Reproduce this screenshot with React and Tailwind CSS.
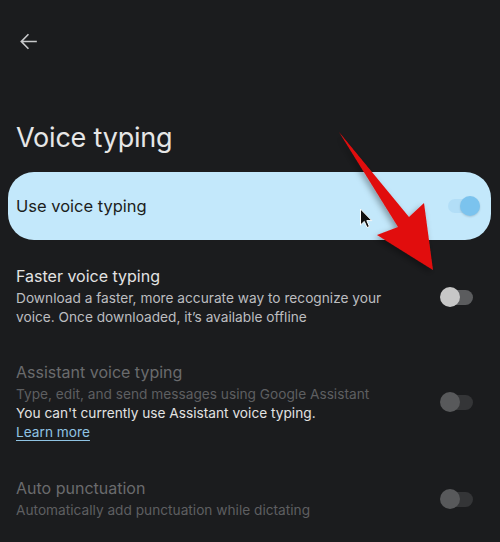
import React from 'react';

const Toggle = ({ on, dim }) => {
  if (on) {
    return (
      <div className="relative w-[32px] h-[20px] shrink-0">
        <div className="absolute left-0 right-0 top-[3px] h-[14px] rounded-full bg-[#b2def7]" />
        <div className="absolute right-0 top-0 w-[20px] h-[20px] rounded-full bg-[#7bc3ee] shadow-[0_1px_2px_rgba(0,0,0,0.15)]" />
      </div>
    );
  }
  return (
    <div className="relative w-[33px] h-[20px] shrink-0">
      <div className={`absolute left-[2px] right-0 top-[3px] h-[15px] rounded-full ${dim ? 'bg-[#343537]' : 'bg-[#5b5c5e]'}`} />
      <div className={`absolute left-0 top-0 w-[20px] h-[20px] rounded-full ${dim ? 'bg-[#58595b]' : 'bg-[#c7c7c7]'}`} />
    </div>
  );
};

const Row = ({ title, dim, toggleDim, className, children }) => (
  <div className={`flex items-center pl-4 pr-[27px] ${className}`}>
    <div className="flex-1">
      <div className={`text-[16px] leading-[20px] ${dim ? 'text-[#6a6b6d]' : 'text-[#e3e3e3]'}`}>{title}</div>
      <div className="mt-[3px] max-w-[390px] text-[13.7px] leading-[19px]">{children}</div>
    </div>
    <Toggle dim={toggleDim} />
  </div>
);

export default function App() {
  return (
    <div
      className="relative w-[500px] h-[542px] overflow-hidden bg-[#1b1c1e]"
      style={{ fontFamily: 'Inter, Roboto, "Noto Sans", sans-serif' }}
    >
      <div className="pt-[29px] pl-4">
        <svg width="25" height="25" viewBox="0 0 24 24" fill="#c8c9cb">
          <path d="M20 11.2H6.9l5.6-5.6-1.1-1.1L4 12l7.4 7.5 1.1-1.1-5.6-5.6H20z" />
        </svg>
      </div>

      <h1 className="mt-[70px] pl-[16px] text-[27px] leading-[27px] text-[#e6e6e6] font-normal tracking-[-0.2px]">Voice typing</h1>

      <div className="mt-[21px] ml-2 mr-[9px] h-[68px] rounded-[26px] bg-[#c3e8fb] flex items-center pl-2 pr-[11px]">
        <span className="flex-1 text-[16.5px] text-[#1c1d20]">Use voice typing</span>
        <Toggle on />
      </div>

      <Row title="Faster voice typing" className="mt-[26px]">
        <div className="text-[#bdbec0]">
          Download a faster, more accurate way to recognize your voice. Once downloaded, it’s available offline
        </div>
      </Row>

      <Row title="Assistant voice typing" dim toggleDim className="mt-[35px]">
        <div className="text-[#5e5f61]">Type, edit, and send messages using Google Assistant</div>
        <div className="text-[#e2e2e2]">You can't currently use Assistant voice typing.</div>
        <div className="text-[#8fc3e3] underline underline-offset-[3px]">Learn more</div>
      </Row>

      <Row title="Auto punctuation" dim toggleDim className="mt-[36px]">
        <div className="text-[#5e5f61]">Automatically add punctuation while dictating</div>
      </Row>

      {/* red annotation arrow */}
      <svg className="absolute left-0 top-0 pointer-events-none" width="500" height="542">
        <defs>
          <filter id="sh" x="-20%" y="-20%" width="140%" height="140%">
            <feDropShadow dx="-2" dy="3" stdDeviation="3" floodColor="#000" floodOpacity="0.35" />
          </filter>
        </defs>
        <path
          d="M339 132 L409 217 L424 203 L433 270 L377 235 L398 227 Z"
          fill="#e10e0e"
          filter="url(#sh)"
        />
      </svg>

      {/* mouse cursor */}
      <svg className="absolute left-[359px] top-[208px] pointer-events-none" width="14" height="22" viewBox="0 0 14 22">
        <path d="M1.5 1 L1.5 17 L5.3 13.4 L8 19.5 L10.4 18.5 L7.8 12.6 L12.8 12.6 Z" fill="#111" stroke="#fff" strokeWidth="1" strokeLinejoin="round" />
      </svg>
    </div>
  );
}
